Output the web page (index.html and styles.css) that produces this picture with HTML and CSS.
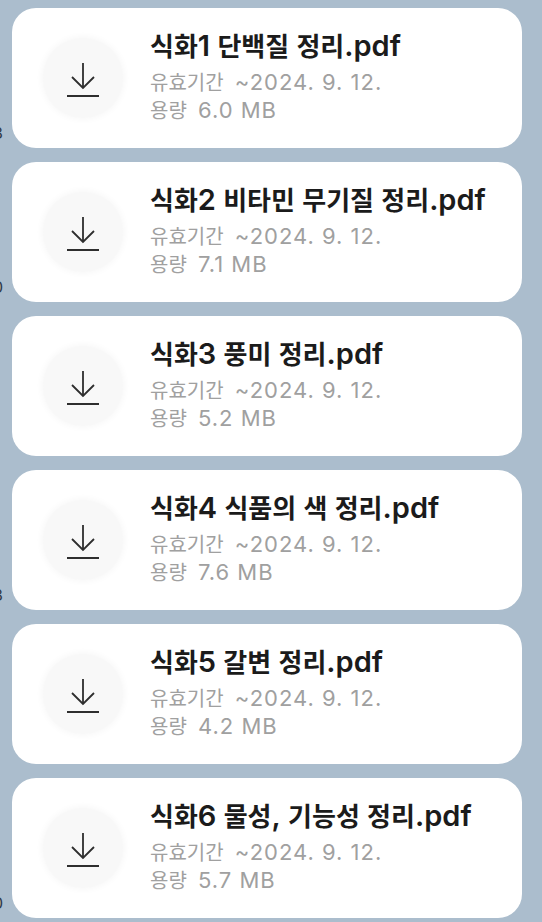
FILE: index.html
```html
<!DOCTYPE html>
<html lang="ko">
<head>
    <meta charset="UTF-8">
    <meta name="viewport" content="width=device-width, initial-scale=1.0">
    <title>파일 목록</title>
    <link rel="stylesheet" href="styles.css">
</head>
<body>

    <div class="file-list">

        <div class="file-row">
            <div class="time-edge"><span>3</span></div>
            <div class="file-card">
                <div class="file-icon">
                    <svg width="34" height="36" viewBox="0 0 34 36"><path d="M16 1 V26 M5 15 L16 26 L27 15 M0 34 H32" /></svg>
                </div>
                <div class="file-info">
                    <div class="file-name">식화<span class="en">1</span> 단백질 정리<span class="en">.pdf</span></div>
                    <div class="file-meta">유효기간&nbsp; <span class="en">~2024. 9. 12.</span></div>
                    <div class="file-meta">용량&nbsp; <span class="en">6.0 MB</span></div>
                </div>
            </div>
        </div>

        <div class="file-row">
            <div class="time-edge"><span>0</span></div>
            <div class="file-card">
                <div class="file-icon">
                    <svg width="34" height="36" viewBox="0 0 34 36"><path d="M16 1 V26 M5 15 L16 26 L27 15 M0 34 H32" /></svg>
                </div>
                <div class="file-info">
                    <div class="file-name">식화<span class="en">2</span> 비타민 무기질 정리<span class="en">.pdf</span></div>
                    <div class="file-meta">유효기간&nbsp; <span class="en">~2024. 9. 12.</span></div>
                    <div class="file-meta">용량&nbsp; <span class="en">7.1 MB</span></div>
                </div>
            </div>
        </div>

        <div class="file-row">
            <div class="time-edge"></div>
            <div class="file-card">
                <div class="file-icon">
                    <svg width="34" height="36" viewBox="0 0 34 36"><path d="M16 1 V26 M5 15 L16 26 L27 15 M0 34 H32" /></svg>
                </div>
                <div class="file-info">
                    <div class="file-name">식화<span class="en">3</span> 풍미 정리<span class="en">.pdf</span></div>
                    <div class="file-meta">유효기간&nbsp; <span class="en">~2024. 9. 12.</span></div>
                    <div class="file-meta">용량&nbsp; <span class="en">5.2 MB</span></div>
                </div>
            </div>
        </div>

        <div class="file-row">
            <div class="time-edge"><span>3</span></div>
            <div class="file-card">
                <div class="file-icon">
                    <svg width="34" height="36" viewBox="0 0 34 36"><path d="M16 1 V26 M5 15 L16 26 L27 15 M0 34 H32" /></svg>
                </div>
                <div class="file-info">
                    <div class="file-name">식화<span class="en">4</span> 식품의 색 정리<span class="en">.pdf</span></div>
                    <div class="file-meta">유효기간&nbsp; <span class="en">~2024. 9. 12.</span></div>
                    <div class="file-meta">용량&nbsp; <span class="en">7.6 MB</span></div>
                </div>
            </div>
        </div>

        <div class="file-row">
            <div class="time-edge"></div>
            <div class="file-card">
                <div class="file-icon">
                    <svg width="34" height="36" viewBox="0 0 34 36"><path d="M16 1 V26 M5 15 L16 26 L27 15 M0 34 H32" /></svg>
                </div>
                <div class="file-info">
                    <div class="file-name">식화<span class="en">5</span> 갈변 정리<span class="en">.pdf</span></div>
                    <div class="file-meta">유효기간&nbsp; <span class="en">~2024. 9. 12.</span></div>
                    <div class="file-meta">용량&nbsp; <span class="en">4.2 MB</span></div>
                </div>
            </div>
        </div>

        <div class="file-row">
            <div class="time-edge"><span>0</span></div>
            <div class="file-card">
                <div class="file-icon">
                    <svg width="34" height="36" viewBox="0 0 34 36"><path d="M16 1 V26 M5 15 L16 26 L27 15 M0 34 H32" /></svg>
                </div>
                <div class="file-info">
                    <div class="file-name">식화<span class="en">6</span> 물성<span class="en">,</span> 기능성 정리<span class="en">.pdf</span></div>
                    <div class="file-meta">유효기간&nbsp; <span class="en">~2024. 9. 12.</span></div>
                    <div class="file-meta">용량&nbsp; <span class="en">5.7 MB</span></div>
                </div>
            </div>
        </div>

    </div>

</body>
</html>
```

FILE: styles.css
```css
body {
    margin: 0;
    padding: 0;
    background-color: #abbdcd; /* chat room background */
    font-family: "Noto Sans CJK KR", sans-serif;
    overflow: hidden;
}

.file-list {
    display: flex;
    flex-direction: column;
    gap: 14px;
    padding: 8px 0 4px;
}

.file-row {
    display: flex;
    align-items: stretch;
}

/* clipped timestamps peeking in from the left edge */
.time-edge {
    width: 12px;
    display: flex;
    justify-content: flex-end;
    align-items: flex-end;
    padding-right: 9px;
    padding-bottom: 6px;
    box-sizing: border-box;
    font-family: "Inter", sans-serif;
    font-size: 16px;
    line-height: 18px;
    color: #2f3a46;
    white-space: nowrap;
}

.file-card {
    width: 510px;
    height: 140px;
    background-color: #ffffff;
    border-radius: 24px;
    display: flex;
    align-items: flex-start;
    padding-left: 31px;
    box-sizing: border-box;
}

.file-icon {
    width: 80px;
    height: 80px;
    margin-top: 30px;
    border-radius: 50%;
    background-color: #f8f8f8;
    box-shadow: 0 0 6px 2px #f8f8f8; /* soft edge */
    display: flex;
    align-items: center;
    justify-content: center;
    flex-shrink: 0;
}

.file-icon svg {
    margin-left: 2px;
    margin-top: 4px;
}

.file-icon path {
    fill: none;
    stroke: #2e2e2e;
    stroke-width: 1.8;
}

.file-info {
    padding-top: 22px;
    padding-left: 27px;
    white-space: nowrap;
}

/* latin runs come out larger than hangul in the original font pairing */
.en {
    font-family: "Inter", sans-serif;
}

.file-name {
    font-size: 26px;
    line-height: 30px;
    font-weight: 600;
    color: #1b1b1b;
    margin-bottom: 7px;
}

.file-name .en {
    font-size: 29px;
}

.file-meta {
    font-size: 20px;
    line-height: 27px;
    color: #a0a0a0;
}

.file-meta .en {
    font-size: 22px;
    letter-spacing: 1px;
}
```
